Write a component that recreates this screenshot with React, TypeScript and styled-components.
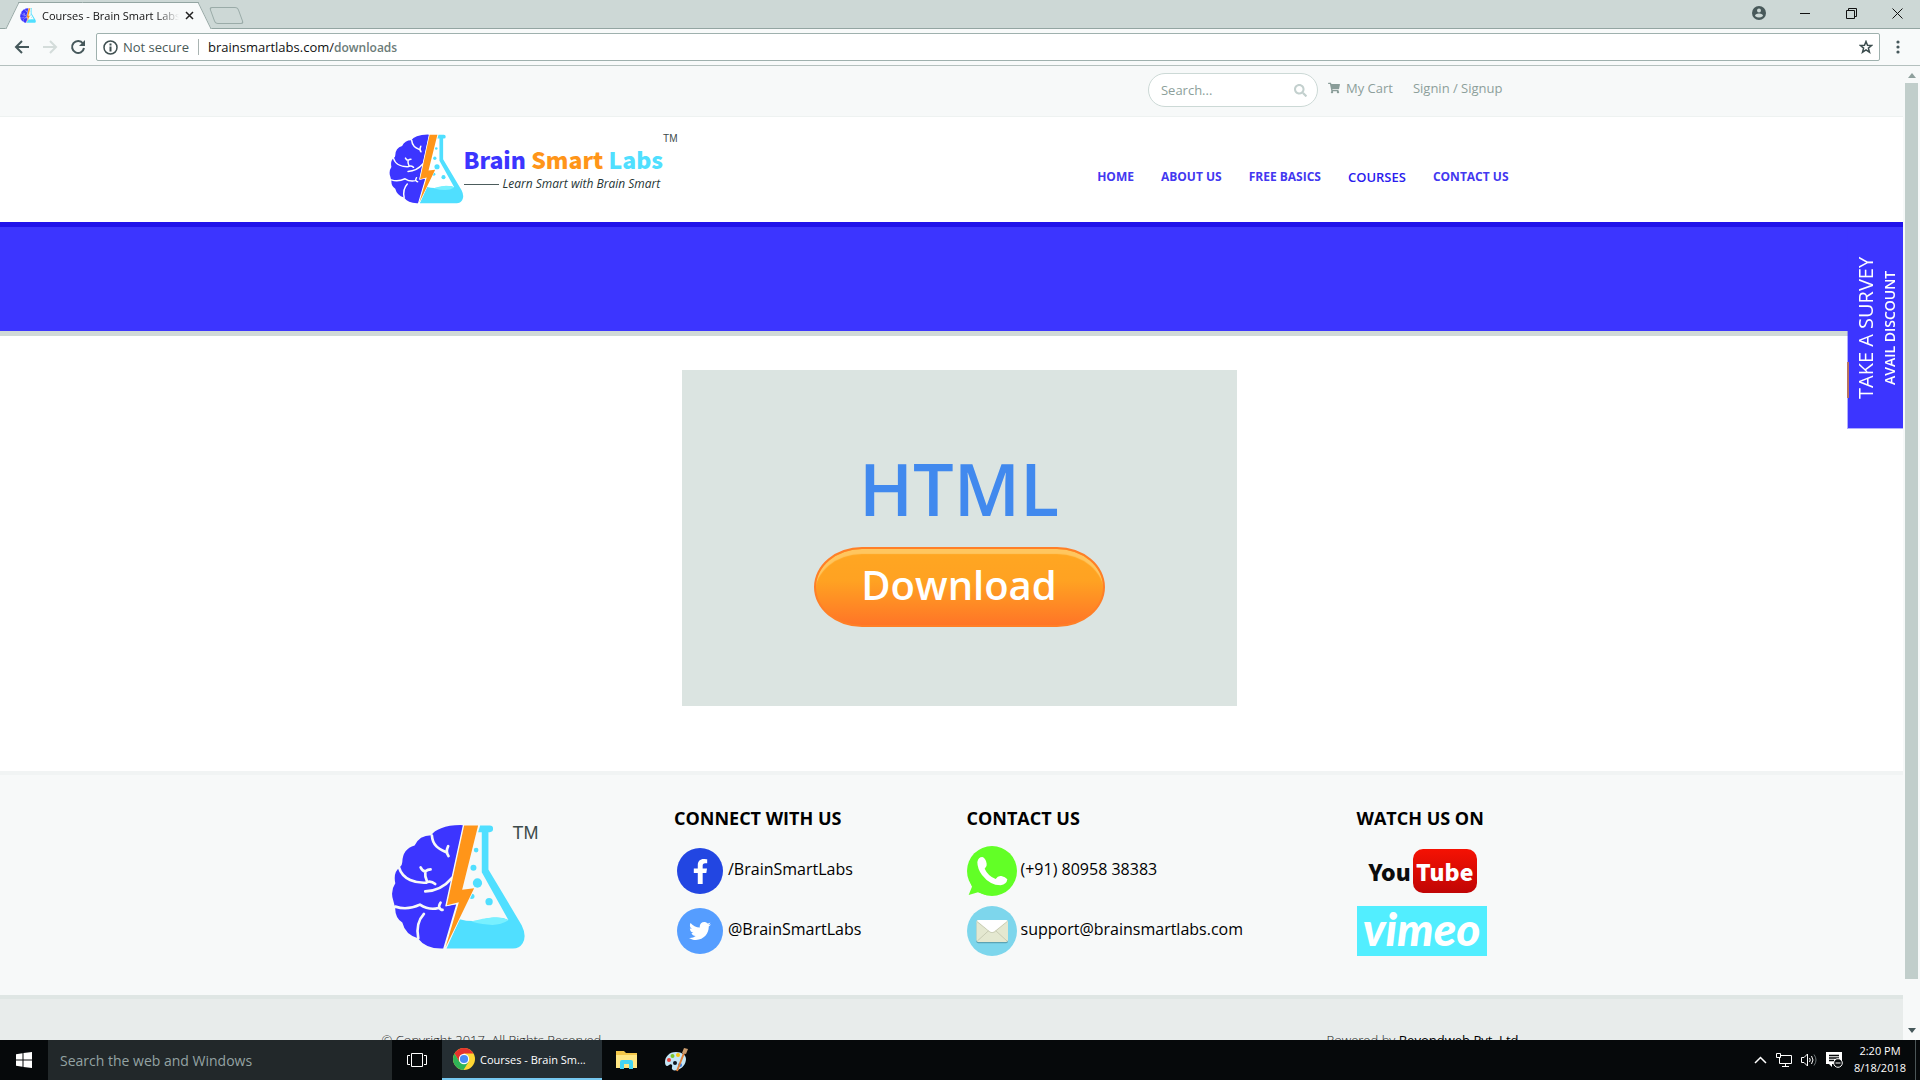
import React from "react";
import styled, { createGlobalStyle } from "styled-components";
import { FaFacebookF, FaTwitter, FaShoppingCart, FaSearch } from "react-icons/fa";

const GlobalStyle = createGlobalStyle`
  *, *::before, *::after { box-sizing: border-box; }
  body { margin: 0; background: #fff; font-family: "Open Sans", "Noto Sans", sans-serif; }
  a { color: inherit; text-decoration: none; }
  button, input { font: inherit; color: inherit; border: 0; padding: 0; background: none; }
  h1, h2, p { margin: 0; }
  svg { display: block; flex: none; }
`;

const Desktop = styled.div`
  display: flex;
  flex-direction: column;
  height: 100vh;
  overflow: hidden;
`;

/* ---------- browser frame ---------- */

const TabStrip = styled.div`
  display: flex;
  align-items: flex-end;
  height: 29px;
  padding-left: 12px;
  background: #cdd8d6;
  border-bottom: 1px solid #93a5a2;
`;

const Tab = styled.div`
  position: relative;
  display: flex;
  align-items: center;
  gap: 6px;
  width: 193px;
  height: 28px;
  padding: 0 11px 0 8px;
  margin-bottom: -1px;
  font-size: 11px;
  color: #111;
  &::before, &::after {
    content: "";
    position: absolute;
    top: 1px;
    bottom: 0;
    background: #f8fafa;
    border-top: 1px solid #93a5a2;
  }
  &::before { left: 0; right: 50%; border-left: 1px solid #93a5a2; transform: skewX(-26deg); }
  &::after { left: 40%; right: 0; border-right: 1px solid #93a5a2; transform: skewX(26deg); }
  > * { position: relative; z-index: 1; }
`;

const TabTitle = styled.span`
  flex: 1;
  overflow: hidden;
  white-space: nowrap;
  mask-image: linear-gradient(90deg, #000 84%, transparent);
`;

const NewTab = styled.button`
  width: 29px;
  height: 17px;
  margin: 0 0 4px 7px;
  border: 1px solid #9aaba8;
  border-radius: 3px;
  transform: skewX(20deg);
`;

const WindowButtons = styled.div`
  display: flex;
  align-items: center;
  gap: 30px;
  height: 28px;
  margin-left: auto;
  padding: 0 15px 2px 0;
  button { display: flex; width: 16px; justify-content: center; }
`;

const Toolbar = styled.div`
  display: flex;
  align-items: center;
  gap: 10px;
  height: 37px;
  padding: 0 14px;
  background: #f8fafa;
  border-bottom: 1px solid #b4c0be;
`;

const HistoryButtons = styled.div`
  display: flex;
  gap: 12px;
`;

const ToolButton = styled.button`
  display: flex;
  width: 16px;
  justify-content: center;
`;

const AddressBar = styled.div`
  display: flex;
  flex: 1;
  align-items: center;
  height: 28px;
  padding: 0 6px;
  font-size: 13px;
  color: #4a5a58;
  background: #fff;
  border: 1px solid #9fb1ae;
  border-radius: 2px;
`;

const Secure = styled.span`
  margin-left: 5px;
  padding-right: 9px;
  line-height: 16px;
  border-right: 1px solid #a9b4b2;
`;

const Url = styled.span`
  flex: 1;
  margin-left: 9px;
  color: #111;
  span { color: #6b7b78; font-size: 12px; font-weight: 600; }
`;

const Viewport = styled.div`
  display: flex;
  flex: 1;
  min-height: 0;
`;

const Page = styled.div`
  position: relative;
  flex: 1;
  overflow: hidden;
  background: #fff;
`;

const ScrollTrack = styled.div`
  display: flex;
  flex-direction: column;
  align-items: center;
  width: 17px;
  padding: 7px 0;
  background: #f7f9f9;
`;

const ScrollThumb = styled.div`
  width: 13px;
  height: 896px;
  margin: 5px 0 auto;
  background: #c1cecb;
`;

/* ---------- web page ---------- */

const Container = styled.div`
  display: flex;
  width: 100%;
  max-width: 1170px;
  margin: 0 auto;
  padding: 0 15px;
`;

const TopBar = styled.div`
  background: #f7f9f9;
  border-bottom: 1px solid #eef2f1;
  ${Container} {
    align-items: center;
    justify-content: flex-end;
    height: 50px;
    padding: 0 34px 6px 15px;
    font-size: 13px;
    font-weight: 400;
    color: #8d9f9b;
  }
`;

const SearchBox = styled.label`
  display: flex;
  align-items: center;
  width: 170px;
  height: 34px;
  margin: 4px 10px 0 0;
  padding: 0 10px 0 12px;
  background: #fff;
  border: 1px solid #ccd9d6;
  border-radius: 17px;
  color: #c3d0ce;
  input {
    flex: 1;
    min-width: 0;
    outline: 0;
    color: #5f7370;
    &::placeholder { color: #8d9f9b; opacity: 1; }
  }
`;

const TopLink = styled.a`
  display: flex;
  align-items: center;
  gap: 6px;
  margin-left: ${(p: { $gap?: number }) => p.$gap ?? 0}px;
  svg { color: #8a9d99; }
`;

const Header = styled.header`
  border-bottom: 5px solid #2013ea;
  ${Container} {
    align-items: flex-start;
    justify-content: space-between;
    height: 105px;
    padding: 0 28px 0 22px;
  }
`;

const Brand = styled.a`
  display: flex;
  padding-top: 17px;
`;

const BrandWords = styled.span`
  display: flex;
  flex-direction: column;
  padding-top: 8px;
`;

const BrandName = styled.span`
  font: 900 23px/34px "Noto Sans CJK JP", "Liberation Sans", sans-serif;
  white-space: nowrap;
  color: #3c35ff;
`;

const Tint = styled.span`
  color: ${(p: { $c: string }) => p.$c};
`;

const Tagline = styled.span`
  display: flex;
  align-items: center;
  gap: 4px;
  font: italic 12px/16px "Open Sans", sans-serif;
  color: #263636;
  white-space: nowrap;
  &::before { content: ""; width: 35px; height: 1px; background: #4c5c5c; }
`;

const Trademark = styled.span`
  margin-left: -${(p: { $size: number; $pull?: number }) => p.$pull ?? 0}px;
  font: ${(p: { $size: number }) => p.$size}px/1 "Liberation Sans", sans-serif;
  color: #3d4b4b;
`;

const Nav = styled.nav`
  display: flex;
  gap: 27px;
  padding-top: 51px;
  font-size: 12px;
  font-weight: 700;
  line-height: 18px;
  color: #4338f0;
`;

const NavLink = styled.a`
  ${(p: { $active?: boolean }) => p.$active && "font-size: 13px; font-weight: 600; color: #2a1bee;"}
`;

const Banner = styled.div`
  height: 109px;
  background: #3c35ff;
  border-bottom: 5px solid #d0d9d7;
`;

const Main = styled.main`
  display: flex;
  justify-content: center;
  padding: 34px 0 65px 15px;
`;

const Card = styled.section`
  display: flex;
  flex-direction: column;
  align-items: center;
  width: 555px;
  height: 336px;
  padding-top: 69px;
  background: #dbe4e1;
`;

const CardTitle = styled.h1`
  font: 600 72px/98px "Open Sans", sans-serif;
  color: #4189ee;
`;

const DownloadButton = styled.button`
  width: 291px;
  height: 80px;
  margin-top: 10px;
  padding-bottom: 4px;
  font: 600 40px/72px "Open Sans", sans-serif;
  color: #fff;
  border: 2px solid #ff7f27;
  border-radius: 48px / 40px;
  background: linear-gradient(#ffa722 0%, #ffa222 42%, #ff7527 100%);
  box-shadow: inset 0 6px 1px -1px #ffc65f;
`;

const SurveyTab = styled.a`
  position: absolute;
  top: 162px;
  right: 0;
  display: flex;
  flex-direction: column;
  align-items: center;
  justify-content: center;
  width: 56px;
  height: 201px;
  writing-mode: vertical-rl;
  transform: rotate(180deg);
  color: #fff;
  background: #3c35ff;
  background-clip: padding-box;
  border-top: 1px solid rgba(60, 53, 255, 0.4);
  border-right: 1px solid rgba(60, 53, 255, 0.4);
  font-size: 14px;
  font-weight: 600;
  line-height: 20px;
  white-space: nowrap;
  &::after {
    content: "";
    position: absolute;
    top: 30px;
    right: -1px;
    width: 2px;
    height: 36px;
    background: #b8735f;
  }
`;

const SurveyTitle = styled.span`
  font-size: 20px;
  font-weight: 400;
  line-height: 28px;
`;

const Footer = styled.footer`
  background: #f7f9f9;
  border-top: 4px solid #f1f4f4;
  ${Container} {
    height: 220px;
    padding: 0;
  }
`;

const Column = styled.div`
  width: ${(p: { $span: number }) => (p.$span / 12) * 100}%;
  padding: 31px 0 0 15px;
`;

const FooterLogo = styled.div`
  display: flex;
  align-items: flex-start;
  padding: 18px 0 0 9px;
`;

const Heading = styled.h2`
  margin-bottom: 16px;
  font-size: 18px;
  font-weight: 700;
  line-height: 24px;
  color: #000;
`;

const Contact = styled.a`
  display: flex;
  align-items: center;
  gap: 4px;
  height: 50px;
  margin-top: 10px;
  font-size: 16px;
  font-weight: 400;
  color: #000;
  ${Heading} + & { margin-top: 0; }
`;

const ContactText = styled.span`
  padding-bottom: 4px;
`;

const Disc = styled.span`
  display: flex;
  align-items: center;
  justify-content: center;
  width: 46px;
  height: 46px;
  margin: 0 1px 0 3px;
  color: #fff;
  background: ${(p: { $c: string }) => p.$c};
  border-radius: 50%;
`;

const YouTubeMark = styled.a`
  display: flex;
  align-items: center;
  gap: 2px;
  height: 50px;
  padding-left: 12px;
  font: 900 23px/44px "Noto Sans CJK JP", "Liberation Sans", sans-serif;
  color: #0c0c0c;
  span {
    width: 64px;
    text-align: center;
    color: #fff;
    background: linear-gradient(#f51203, #c00505);
    border-radius: 10px;
  }
`;

const VimeoMark = styled.a`
  display: block;
  width: 130px;
  height: 50px;
  margin-top: 10px;
  font: italic 900 46px/46px Lato, sans-serif;
  text-align: center;
  color: #fff;
  background: #52eeff;
`;

const Legal = styled.div`
  background: #e8eceb;
  border-top: 4px solid #dfe6e4;
  ${Container} {
    justify-content: space-between;
    padding: 30px 18px 30px 15px;
    font-size: 13px;
    font-weight: 300;
    line-height: 22px;
    color: #222;
    a { font-weight: 400; color: #000; }
  }
`;

/* ---------- taskbar ---------- */

const Taskbar = styled.div`
  display: flex;
  align-items: stretch;
  height: 40px;
  flex: none;
  background: #06090b;
  color: #fff;
`;

const TaskButton = styled.button`
  display: flex;
  align-items: center;
  justify-content: center;
  width: ${(p: { $w: number }) => p.$w}px;
`;

const TaskSearch = styled.input`
  width: 344px;
  padding: 0 12px;
  font-size: 14px;
  background: #22282a;
  &::placeholder { color: #94a3a3; opacity: 1; }
`;

const RunningApp = styled.button`
  display: flex;
  align-items: center;
  gap: 5px;
  width: 160px;
  padding: 0 11px;
  font-size: 11px;
  white-space: nowrap;
  background: #252e33;
  border-bottom: 2px solid #76c8f0;
`;

const Tray = styled.div`
  display: flex;
  align-items: center;
  gap: 9px;
  margin-left: auto;
`;

const Clock = styled.div`
  width: 60px;
  margin: 0 5px 2px -2px;
  font-size: 11px;
  line-height: 17px;
  text-align: center;
`;

const ShowDesktop = styled.button`
  width: 5px;
  border-left: 1px solid #4b5557;
`;

/* ---------- drawings ---------- */

const BrainFlask = ({ width, bg }: { width: number; bg: string }) => (
  <svg width={width} height={Math.round(width * 0.93)} viewBox="63 194 406 378" aria-hidden="true">
    <path fill="#3c35ff" d="M279 197Q240 196 214 206Q192 214 184 227Q148 227 134 258Q98 268 97 308Q97 318 89 324Q69 338 76 372Q60 396 70 424Q73 436 76 446Q74 474 97 490Q106 527 144 537Q166 568 214 568H220L259 436L226 441Z" />
    <g fill="none" stroke={bg} strokeWidth="8" strokeLinecap="round" strokeLinejoin="round">
      <path d="M186 228C188 262 212 270 232 280M235 260Q226 278 236 290" />
      <path d="M87 324C98 362 138 372 170 370M152 324Q158 336 166 336Q164 352 172 368Q184 364 196 374M166 336Q174 330 182 330" />
      <path d="M166 396Q214 394 246 356" />
      <path d="M76 442Q112 454 150 436Q178 454 206 446M212 430Q206 440 208 444Q212 452 218 452" />
      <path d="M162 464C140 488 140 512 145 537" />
    </g>
    <circle cx="306" cy="411" r="8" fill="#50dfff" />
    <path fill="#50dfff" d="M331 198H360A10 10 0 0 1 360 218H356V330L456 498Q472 530 459 552Q449 568 430 568H230L269 480Q315 492 350 478Q392 470 416 482L336 339V218H325Z" />
    <path fill="#78f0ff" d="M304 487Q340 476 372 474Q408 476 416 483Q394 497 368 497Q340 497 304 487Z" />
    <path fill="#ff9519" stroke={bg} strokeWidth="5" paintOrder="stroke" d="M283 198H325L277 391L313 387L227 564L267 429L231 438Z" />
    <g fill="#50dfff">
      <circle cx="319" cy="272" r="7" />
      <circle cx="311" cy="325" r="9" />
      <circle cx="323" cy="371" r="14" />
      <circle cx="358" cy="427" r="11" />
    </g>
  </svg>
);

const WhatsAppIcon = () => (
  <svg width="50" height="50" viewBox="81 198 150 150" aria-hidden="true">
    <circle cx="156" cy="273" r="75" fill="#62ff26" />
    <path fill="#62ff26" d="M90 304L96 320L86 345L114 337L140 346Z" />
    <path fill="#fff" d="M112 246Q115 231 127 231Q137 234 140 251Q142 259 134 266Q144 288 167 297Q174 286 184 288Q196 290 202 298Q200 313 182 316Q150 316 126 285Q112 266 112 246Z" />
  </svg>
);

const MailIcon = () => (
  <svg width="50" height="50" viewBox="81 378 150 150" aria-hidden="true">
    <circle cx="156" cy="453" r="75" fill="#7dd6ec" />
    <rect x="109" y="424" width="95" height="66" rx="6" fill="#5ba3b4" />
    <rect x="109" y="420" width="95" height="66" rx="6" fill="#e4e8d0" />
    <path fill="none" stroke="#b9bda4" strokeWidth="2" d="M112 483L147 451M201 483L166 451M110 424L150 456Q156 460 163 456L202 424" />
    <path fill="#fff" d="M111 422Q113 420 116 420H197Q201 420 202 422L163 454Q156 459 149 454Z" />
  </svg>
);

const ChromeIcon = () => (
  <svg width="22" height="22" viewBox="0 0 22 22" aria-hidden="true">
    <circle cx="11" cy="11" r="11" fill="#ffd633" />
    <path fill="#e5332d" d="M1.5 5.5A11 11 0 0 1 20.5 5.5H11L6 13.5Z" />
    <path fill="#2fb457" d="M1.5 5.5A11 11 0 0 0 10.5 22L15.6 13.8L11 16L6.2 13.5Z" />
    <circle cx="11" cy="11" r="5.2" fill="#fff" />
    <circle cx="11" cy="11" r="4.1" fill="#4a8af4" />
  </svg>
);

const FolderIcon = () => (
  <svg width="21" height="18" viewBox="0 0 21 18" aria-hidden="true">
    <path fill="#f3c74a" d="M0 0H8L10 2H21V17H0Z" />
    <path fill="#ffe784" d="M0 4H21V17H0Z" />
    <path fill="#43d5f4" d="M4 18V11Q4 9 6 9H15Q17 9 17 11V18H13V13H8V18Z" />
  </svg>
);

const PaintIcon = () => (
  <svg width="24" height="24" viewBox="0 0 24 24" aria-hidden="true">
    <path fill="#c4e6f6" d="M12 4C5 4 1 9 1 14C1 18 3 19 5 17C7 15 9 17 8 19C7 22 10 23 13 22C18 21 22 16 22 11C22 7 18 4 12 4Z" />
    <circle cx="5" cy="12" r="2" fill="#e8423b" />
    <circle cx="8.500" cy="8" r="2" fill="#7ac52c" />
    <circle cx="14" cy="7" r="2" fill="#f6c313" />
    <circle cx="16" cy="17" r="2" fill="#3d7be0" />
    <circle cx="11" cy="15" r="2" fill="#101820" />
    <path stroke="#e0813a" strokeWidth="2" d="M20 5L13 23" />
    <path fill="#c99b6d" d="M18 5L20 0L24 1L22 6Z" />
  </svg>
);

const Arrow = ({ flip, color }: { flip?: boolean; color: string }) => (
  <svg width="16" height="16" viewBox="0 0 16 16" fill="none" stroke={color} strokeWidth="2" aria-hidden="true">
    <path d={flip ? "M1 8H14M8 2L14 8L8 14" : "M15 8H2M8 2L2 8L8 14"} />
  </svg>
);

export default function App() {
  return (
    <Desktop>
      <GlobalStyle />
      <TabStrip>
        <Tab>
          <BrainFlask width={16} bg="#f8fafa" />
          <TabTitle>Courses - Brain Smart Labs</TabTitle>
          <button aria-label="Close tab">
            <svg width="9" height="9" viewBox="0 0 9 9" stroke="#222" strokeWidth="1.500"><path d="M1 1L8 8M8 1L1 8" /></svg>
          </button>
        </Tab>
        <NewTab aria-label="New tab" />
        <WindowButtons>
          <button aria-label="Profile">
            <svg width="14" height="14" viewBox="0 0 14 14"><circle cx="7" cy="7" r="7" fill="#48595a" /><circle cx="7" cy="4.500" r="2" fill="#cdd8d6" /><path fill="#cdd8d6" d="M3 10Q3 7.500 7 7.500Q11 7.500 11 10Q7 13 3 10Z" /></svg>
          </button>
          <button aria-label="Minimize">
            <svg width="10" height="10" stroke="#111"><path d="M0 5.500H10" /></svg>
          </button>
          <button aria-label="Restore">
            <svg width="11" height="11" fill="none" stroke="#111"><path d="M.5 2.500H8.500V10.500H.5ZM2.500 2.500V.5H10.500V8.500H8.500" /></svg>
          </button>
          <button aria-label="Close">
            <svg width="11" height="11" stroke="#111"><path d="M.5 .5L10.500 10.500M10.500 .5L.5 10.500" /></svg>
          </button>
        </WindowButtons>
      </TabStrip>
      <Toolbar>
        <HistoryButtons>
          <ToolButton aria-label="Back"><Arrow color="#46585b" /></ToolButton>
          <ToolButton aria-label="Forward"><Arrow flip color="#d4dcda" /></ToolButton>
          <ToolButton aria-label="Reload">
            <svg width="16" height="16" viewBox="0 0 16 16" fill="none" stroke="#46585b" strokeWidth="2"><path d="M13 4.500A6 6 0 1 0 14 9" /><path fill="#46585b" stroke="none" d="M15 1V7H9Z" /></svg>
          </ToolButton>
        </HistoryButtons>
        <AddressBar>
          <svg width="15" height="15" viewBox="0 0 15 15" fill="none" stroke="#3f4f50" strokeWidth="1.500"><circle cx="7.500" cy="7.500" r="6.500" /><path strokeWidth="2" d="M7.500 6.500V11.500M7.500 3.500V5.500" /></svg>
          <Secure>Not secure</Secure>
          <Url>brainsmartlabs.com/<span>downloads</span></Url>
          <svg width="14" height="14" viewBox="0 0 14 14" fill="none" stroke="#3c4d4e" strokeWidth="1.500"><path d="M7 1.500L8.500 5.300L12.600 5.500L9.400 8.100L10.500 12.200L7 9.900L3.500 12.200L4.600 8.100L1.400 5.500L5.500 5.300Z" /></svg>
        </AddressBar>
        <ToolButton aria-label="Menu">
          <svg width="4" height="14" fill="#46585b"><circle cx="2" cy="2" r="1.600" /><circle cx="2" cy="7" r="1.600" /><circle cx="2" cy="12" r="1.600" /></svg>
        </ToolButton>
      </Toolbar>

      <Viewport>
        <Page>
          <TopBar>
            <Container>
              <SearchBox>
                <input type="text" placeholder="Search..." aria-label="Search" />
                <FaSearch size={13} />
              </SearchBox>
              <TopLink href="#cart"><FaShoppingCart size={12} />My Cart</TopLink>
              <TopLink href="#signin" $gap={20}>Signin / Signup</TopLink>
            </Container>
          </TopBar>

          <Header>
            <Container>
              <Brand href="#home">
                <BrainFlask width={75} bg="#fff" />
                <BrandWords>
                  <BrandName>Brain <Tint $c="#ff9519">Smart</Tint> <Tint $c="#50dfff">Labs</Tint></BrandName>
                  <Tagline>Learn Smart with Brain Smart</Tagline>
                </BrandWords>
                <Trademark $size={10}>TM</Trademark>
              </Brand>
              <Nav>
                <NavLink href="#home">HOME</NavLink>
                <NavLink href="#about">ABOUT US</NavLink>
                <NavLink href="#basics">FREE BASICS</NavLink>
                <NavLink href="#courses" $active>COURSES</NavLink>
                <NavLink href="#contact">CONTACT US</NavLink>
              </Nav>
            </Container>
          </Header>
          <Banner />

          <Main>
            <Card>
              <CardTitle>HTML</CardTitle>
              <DownloadButton>Download</DownloadButton>
            </Card>
          </Main>

          <Footer>
            <Container>
              <Column $span={3}>
                <FooterLogo>
                  <BrainFlask width={135} bg="#f7f9f9" />
                  <Trademark $size={18} $pull={13}>TM</Trademark>
                </FooterLogo>
              </Column>
              <Column $span={3}>
                <Heading>CONNECT WITH US</Heading>
                <Contact href="#facebook">
                  <Disc $c="#2246e2"><FaFacebookF size={25} /></Disc>
                  <ContactText>/BrainSmartLabs</ContactText>
                </Contact>
                <Contact href="#twitter">
                  <Disc $c="#559dff"><FaTwitter size={22} /></Disc>
                  <ContactText>@BrainSmartLabs</ContactText>
                </Contact>
              </Column>
              <Column $span={4}>
                <Heading>CONTACT US</Heading>
                <Contact href="#phone"><WhatsAppIcon /><ContactText>(+91) 80958 38383</ContactText></Contact>
                <Contact href="#mail"><MailIcon /><ContactText>support@brainsmartlabs.com</ContactText></Contact>
              </Column>
              <Column $span={2}>
                <Heading>WATCH US ON</Heading>
                <YouTubeMark href="#youtube">You<span>Tube</span></YouTubeMark>
                <VimeoMark href="#vimeo">vimeo</VimeoMark>
              </Column>
            </Container>
          </Footer>
          <Legal>
            <Container>
              <p>© Copyright 2017. All Rights Reserved.</p>
              <p>Powered by <a href="#beyondweb">Beyondweb Pvt. Ltd</a></p>
            </Container>
          </Legal>

          <SurveyTab href="#survey">
            <SurveyTitle>TAKE A SURVEY</SurveyTitle>
            <span>AVAIL DISCOUNT</span>
          </SurveyTab>
        </Page>
        <ScrollTrack>
          <svg width="8" height="5" fill="#8fa09d"><path d="M0 5L4 0L8 5Z" /></svg>
          <ScrollThumb />
          <svg width="8" height="5" fill="#46585b"><path d="M0 0L4 5L8 0Z" /></svg>
        </ScrollTrack>
      </Viewport>

      <Taskbar>
        <TaskButton $w={48} aria-label="Start">
          <svg width="16" height="16" viewBox="0 0 16 16" fill="#fff"><path d="M0 2.300L6.500 1.300V7.500H0ZM7.500 1.100L16 0V7.500H7.500ZM0 8.500H6.500V14.700L0 13.700ZM7.500 8.500H16V16L7.500 14.900Z" /></svg>
        </TaskButton>
        <TaskSearch type="text" placeholder="Search the web and Windows" aria-label="Search the web and Windows" />
        <TaskButton $w={50} aria-label="Task view">
          <svg width="20" height="14" fill="none" stroke="#fff"><path d="M4.500 .5H15.500V13.500H4.500ZM3 2.500H.5V11.500H3M17 2.500H19.500V11.500H17" /></svg>
        </TaskButton>
        <RunningApp><ChromeIcon />Courses - Brain Sm...</RunningApp>
        <TaskButton $w={49} aria-label="File Explorer"><FolderIcon /></TaskButton>
        <TaskButton $w={49} aria-label="Paint"><PaintIcon /></TaskButton>
        <Tray>
          <svg width="13" height="8" fill="none" stroke="#fff" strokeWidth="1.500"><path d="M1 7L6.500 1.500L12 7" /></svg>
          <svg width="16" height="14" fill="none" stroke="#fff"><path d="M5 2.500H15.500V10.500H3.500V5M9.500 10.500V13.500M6 13.500H13M.5 .5H4.500V4.500H.5Z" /></svg>
          <svg width="16" height="14" fill="none" stroke="#fff"><path d="M.5 4.500H3L6.500 1V13L3 9.500H.5ZM8.500 5Q10 7 8.500 9M10.500 3Q13.500 7 10.500 11" /><path stroke="#6a7375" d="M13 1.500Q17 7 13 12.500" /></svg>
          <svg width="17" height="16"><path fill="#fff" d="M0 0H16V12H6V15L3 12H0Z" /><path stroke="#06090b" strokeWidth="1.500" d="M3 3.500H13M3 6H13M3 8.500H8" /><circle cx="12" cy="11" r="4.300" fill="#06090b" stroke="#fff" /><path stroke="#fff" d="M9.500 11H14.500" /></svg>
          <Clock>2:20 PM<br />8/18/2018</Clock>
        </Tray>
        <ShowDesktop aria-label="Show desktop" />
      </Taskbar>
    </Desktop>
  );
}
